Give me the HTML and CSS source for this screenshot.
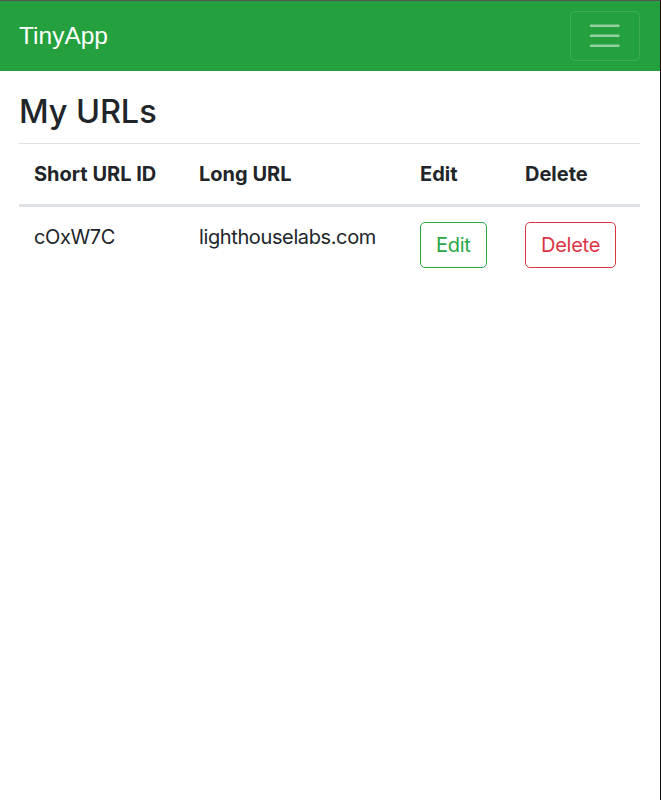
FILE: index.html
```html
<!DOCTYPE html>
<html lang="en">
<head>
<meta charset="utf-8">
<title>TinyApp</title>
<link rel="stylesheet" href="styles.css">
</head>
<body>
<nav class="navbar">
  <a class="brand" href="#">TinyApp</a>
  <button class="toggler" type="button" aria-label="Toggle navigation">
    <svg class="toggler-icon" viewBox="0 0 30 30" width="37.5" height="37.5">
      <path d="M4 7h22M4 15h22M4 23h22" stroke="rgba(255,255,255,0.5)" stroke-width="2" stroke-linecap="round" stroke-miterlimit="10" fill="none"/>
    </svg>
  </button>
</nav>
<main class="container">
  <h2 class="title">My URLs</h2>
  <table class="table">
    <colgroup>
      <col class="c1"><col class="c2"><col class="c3"><col class="c4">
    </colgroup>
    <thead>
      <tr>
        <th>Short URL ID</th>
        <th>Long URL</th>
        <th>Edit</th>
        <th>Delete</th>
      </tr>
    </thead>
    <tbody>
      <tr>
        <td>cOxW7C</td>
        <td>lighthouselabs.com</td>
        <td><a class="btn btn-success" href="#">Edit</a></td>
        <td><button class="btn btn-danger" type="button">Delete</button></td>
      </tr>
    </tbody>
  </table>
</main>
</body>
</html>
```
FILE: styles.css
```css
*, *::before, *::after { box-sizing: border-box; }

html, body { margin: 0; padding: 0; }

body {
  min-height: 100vh;
  border-top: 1px solid #555;
  border-right: 1px solid #111;
  background: #fff;
  color: #212529;
  font-family: Inter, "Noto Sans", "Liberation Sans", sans-serif;
  font-size: 20px;
  line-height: 1.5;
}

.navbar {
  display: flex;
  align-items: center;
  justify-content: space-between;
  height: 70px;
  padding: 10px 20px 10px 19px;
  background: #24a03e;
}

.brand {
  font-family: "Liberation Sans", Arial, sans-serif;
  font-size: 24.5px;
  line-height: 1.5;
  color: #fff;
  text-decoration: none;
}

.toggler {
  display: flex;
  align-items: center;
  justify-content: center;
  width: 70px;
  height: 50px;
  padding: 5px 15px;
  background: transparent;
  border: 1px solid rgba(255,255,255,0.12);
  border-radius: 5px;
}

.toggler-icon { display: block; flex: none; }

.container {
  padding: 0 20px 0 19px;
}

.title {
  margin: 21px 0 12px;
  font-size: 32.5px;
  font-weight: 500;
  line-height: 39px;
  letter-spacing: -0.1px;
}

.table {
  width: 100%;
  border-collapse: collapse;
  table-layout: fixed;
}

.c1 { width: 165px; }
.c2 { width: 221px; }
.c3 { width: 105px; }
.c4 { width: auto; }

.table th,
.table td {
  padding: 15px;
  text-align: left;
  vertical-align: top;
}

.table th {
  font-weight: 700;
  vertical-align: bottom;
  border-top: 1px solid #dee2e6;
  border-bottom: 3px solid #dee2e6;
}

.table td {
  letter-spacing: -0.38px;
}

.btn {
  display: inline-block;
  padding: 7px 15px;
  font-family: inherit;
  font-size: 20px;
  line-height: 30px;
  font-weight: 400;
  letter-spacing: -0.25px;
  border: 1px solid;
  border-radius: 5px;
  background: transparent;
  text-decoration: none;
  cursor: pointer;
}

.btn-success { color: #28a745; border-color: #28a745; }
.btn-danger { color: #dc3545; border-color: #dc3545; }
```
